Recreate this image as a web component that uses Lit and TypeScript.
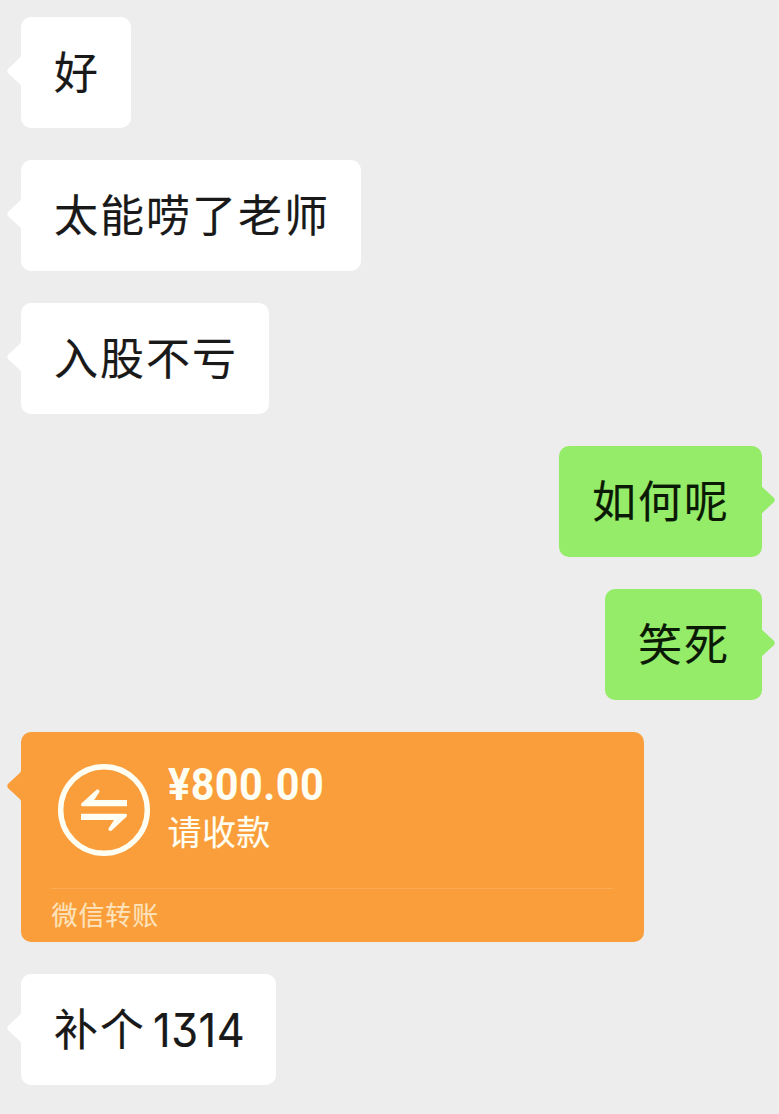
import { LitElement, html, css } from "lit";
import { customElement, property } from "lit/decorators.js";

@customElement("chat-bubble")
class ChatBubble extends LitElement {
  @property({ reflect: true }) side = "left";
  @property({ reflect: true }) kind = "text";

  static styles = css`
    :host {
      display: block;
      position: relative;
      box-sizing: border-box;
      border-radius: 10px;
      align-self: flex-start;
      background: var(--fill);
      color: #191919;
      --fill: #ffffff;
    }
    :host([side="right"]) {
      --fill: #95ec69;
      align-self: flex-end;
      color: #0b1a05;
    }
    :host([kind="transfer"]) {
      --fill: #fa9e3b;
    }
    .tail {
      position: absolute;
      top: 38px;
      left: -14px;
      width: 15px;
      height: 32px;
      fill: var(--fill);
    }
    :host([side="right"]) .tail {
      left: auto;
      right: -13px;
      transform: scaleX(-1);
    }
    .text {
      height: 111px;
      padding: 0 31px 0 33px;
      box-sizing: border-box;
      font-size: 44px;
      letter-spacing: 2px;
      line-height: 107px;
      white-space: nowrap;
      -webkit-text-stroke: 0.15px currentColor;
    }
    :host([side="right"]) .text {
      padding: 0 32px 0 33px;
    }
  `;

  render() {
    return html`
      <svg class="tail" viewBox="0 0 15 32">
        <path d="M15 .3L14 1Q13.4 2.6 12 3.8L1.4 13.4Q-.9 16 1.4 18.6L12 28.2Q13.4 29.4 14 31L15 31.7Z" />
      </svg>
      ${this.kind === "transfer" ? html`<slot></slot>` : html`<div class="text"><slot></slot></div>`}
    `;
  }
}

@customElement("app-root")
class AppRoot extends LitElement {
  static styles = css`
    :host {
      display: block;
      box-sizing: border-box;
      height: 1114px;
      overflow: hidden;
      background: #ededed;
      font-family: "Noto Sans CJK SC", sans-serif;
    }
    .chat {
      display: flex;
      flex-direction: column;
      gap: 32px;
      padding: 17px 17px 0 21px;
    }
    .transfer {
      display: flex;
      flex-direction: column;
      box-sizing: border-box;
      width: 623px;
      height: 210px;
      padding: 0 31px 0 30px;
      color: #fffef2;
    }
    .main {
      display: flex;
      height: 156px;
      box-sizing: border-box;
      padding: 32px 0 0 7px;
      gap: 17.5px;
    }
    .icon {
      width: 92px;
      height: 92px;
      flex: none;
    }
    .info {
      display: flex;
      flex-direction: column;
    }
    .amount {
      font: 700 45px/42px Roboto, sans-serif;
      letter-spacing: 0.5px;
      transform: scaleX(0.92);
      transform-origin: 0 0;
    }
    .note {
      font-size: 34px;
      line-height: 49px;
      letter-spacing: 0.4px;
      -webkit-text-stroke: 0.15px currentColor;
    }
    .foot {
      border-top: 1px solid #fbab54;
      font-size: 26px;
      line-height: 50px;
      letter-spacing: 0.9px;
      text-indent: 0.5px;
      color: #fde3bd;
      -webkit-text-stroke: 0.15px currentColor;
    }
    .digits {
      display: inline-block;
      box-sizing: border-box;
      width: 95px;
      margin: 0 -3px 0 7px;
      font-family: Inter, sans-serif;
      font-size: 47px;
      line-height: 1;
      letter-spacing: 0.6px;
      font-feature-settings: "cv09";
      -webkit-text-stroke: 0.2px currentColor;
      transform: translateY(1px) scaleX(0.92);
      transform-origin: 0 0;
    }
  `;

  render() {
    return html`
      <div class="chat">
        <chat-bubble>好</chat-bubble>
        <chat-bubble>太能唠了老师</chat-bubble>
        <chat-bubble>入股不亏</chat-bubble>
        <chat-bubble side="right">如何呢</chat-bubble>
        <chat-bubble side="right">笑死</chat-bubble>
        <chat-bubble kind="transfer">
          <div class="transfer">
            <div class="main">
              <svg class="icon" viewBox="0 0 92 92">
                <circle cx="46" cy="46" r="43.3" fill="none" stroke="#fffef2" stroke-width="5.4" />
                <path
                  d="M69 42.2H24.5Q22.4 42 23.3 39.4L38.8 25.6Q41.3 24.8 41.6 27.8L36.2 36H69ZM23 49.8H67.5Q69.6 50 68.7 52.6L53.2 66.9Q50.6 67.7 50.3 64.7L56 56H23Z"
                  fill="#fffef2"
                />
              </svg>
              <div class="info">
                <div class="amount">¥800.00</div>
                <div class="note">请收款</div>
              </div>
            </div>
            <div class="foot">微信转账</div>
          </div>
        </chat-bubble>
        <chat-bubble>补个<span class="digits">1314</span></chat-bubble>
      </div>
    `;
  }
}
